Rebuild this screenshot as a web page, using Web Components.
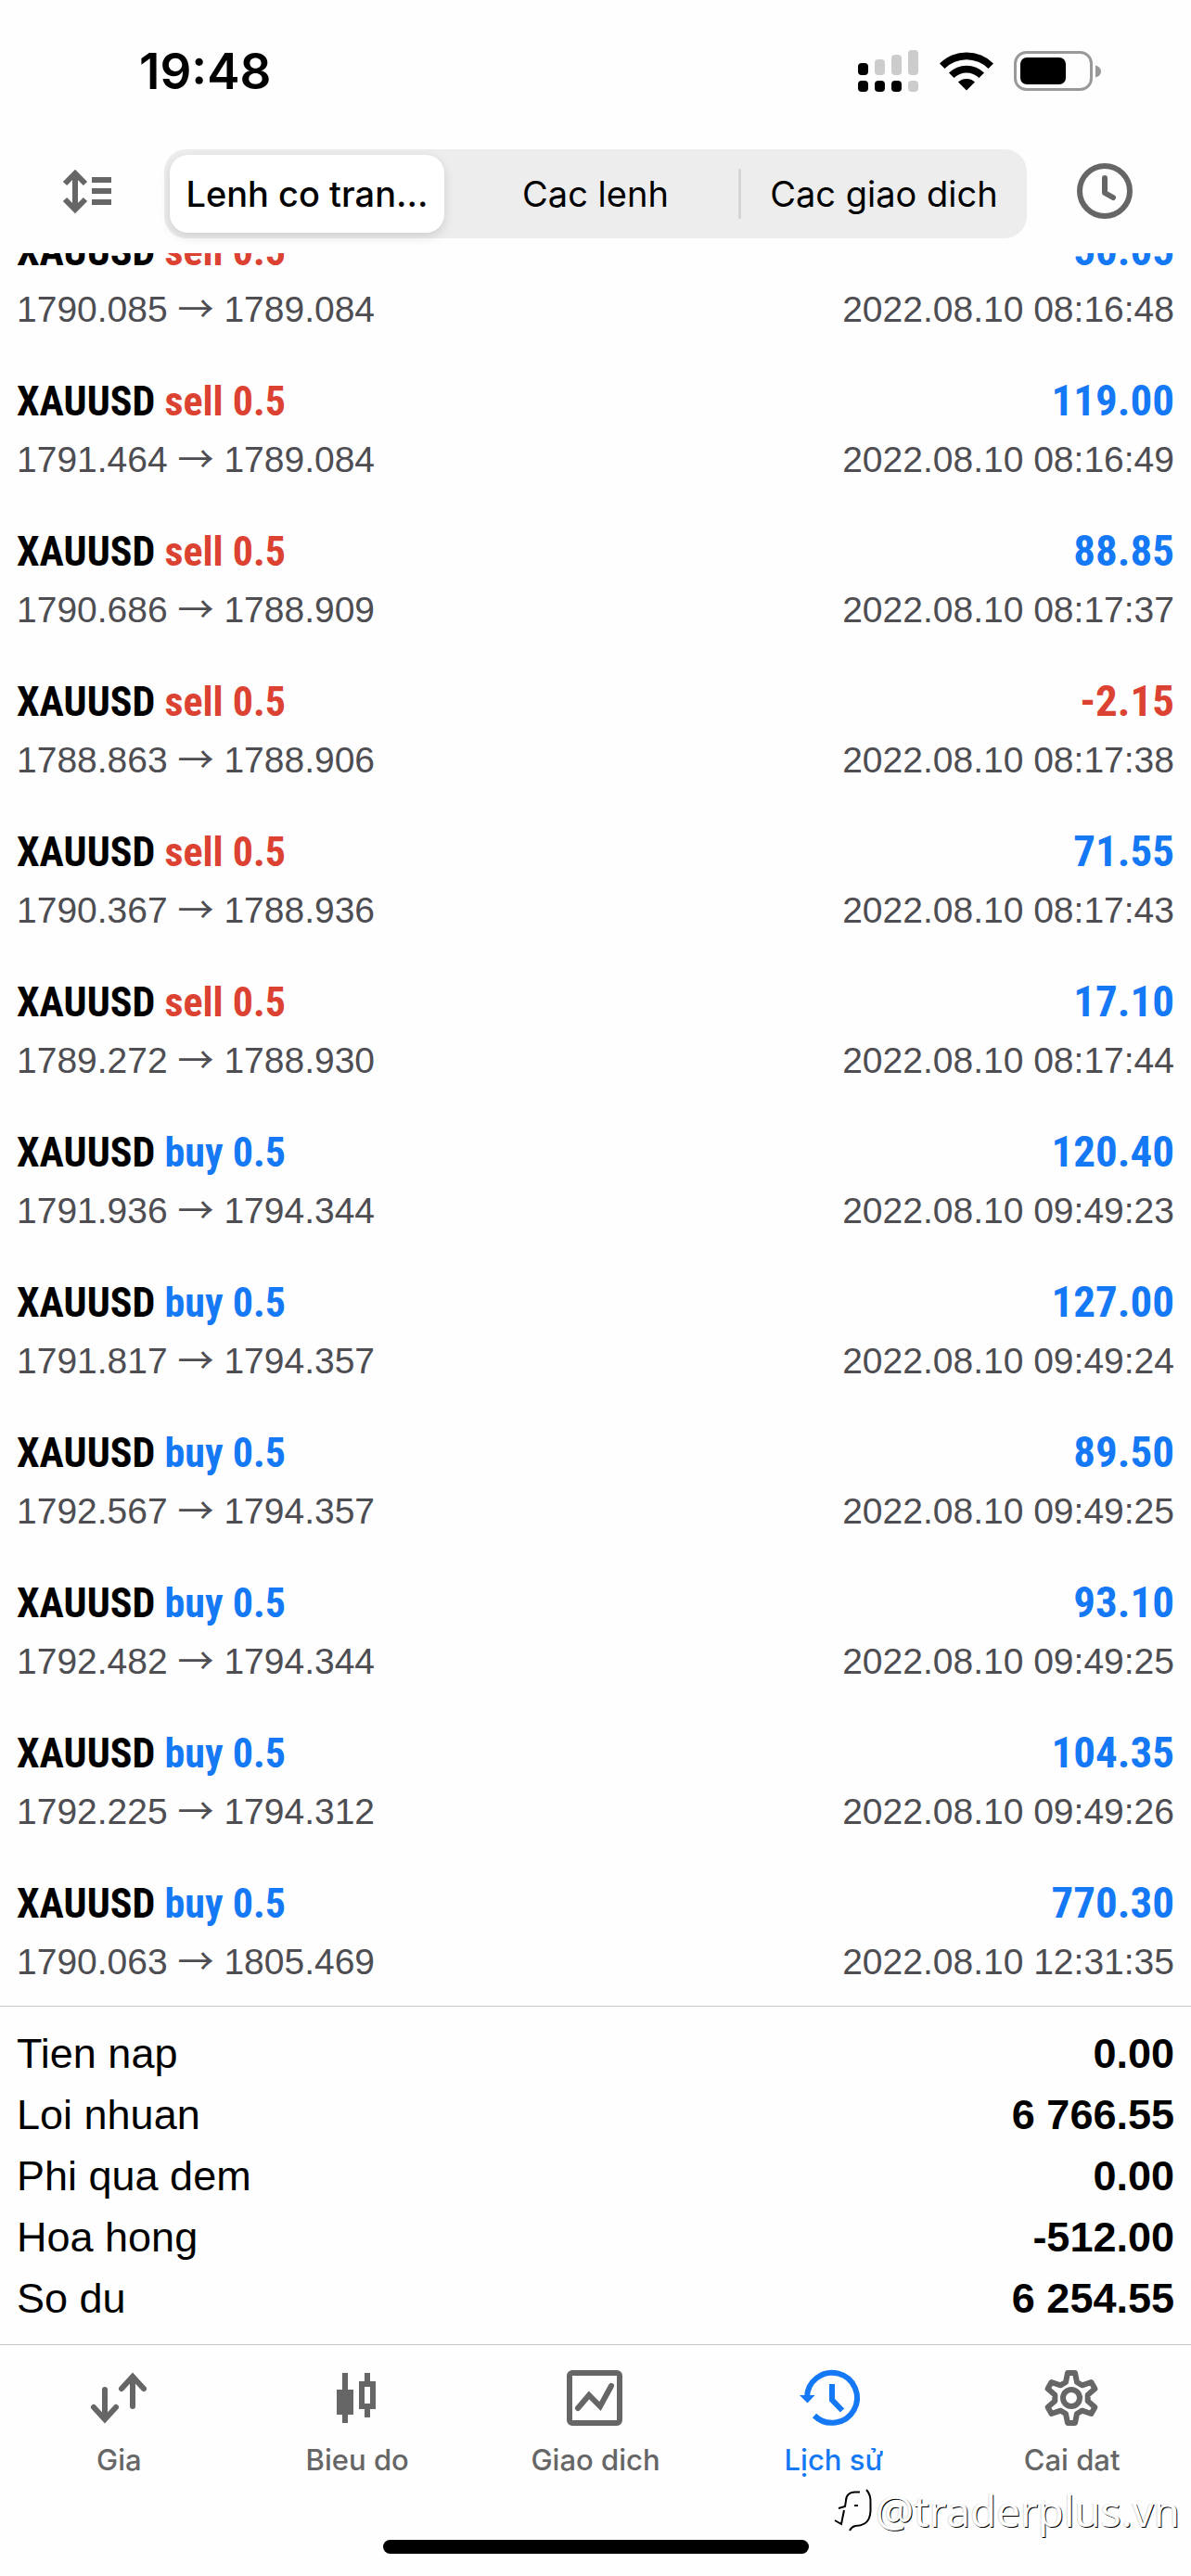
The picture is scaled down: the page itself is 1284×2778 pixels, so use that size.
<!DOCTYPE html>
<html lang="vi">
<head>
<meta charset="utf-8">
<meta name="viewport" content="width=device-width, initial-scale=1">
<title>Lịch sử</title>
<style>
  html, body { margin: 0; height: 100%; }
  body {
    background: #fefefe;
    color: #000;
    font-family: "Liberation Sans", Arial, sans-serif;
    --ui: Inter, Roboto, sans-serif;
    --narrow: "Roboto Condensed", "Liberation Sans Narrow", sans-serif;
    --gray: #666;
    --sub: #4d4d52;
    --blue: #1579f5;
    --red: #dc4232;
    --line: #c8c8c8;
    --edge: 18px;
  }
</style>
</head>
<body>
<history-app></history-app>

<script>
const define = (name, html, setup) => {
  const template = document.createElement('template');
  template.innerHTML = html;
  customElements.define(name, class extends HTMLElement {
    connectedCallback() {
      if (this.shadowRoot) return;
      const root = this.attachShadow({ mode: 'open' });
      root.append(template.content.cloneNode(true));
      if (setup) setup(this, root);
    }
  });
};

define('status-bar', `
<style>
  :host { display: flex; flex: none; justify-content: space-between; align-items: center; height: 145px; padding: 8px 96px 0 150px; box-sizing: border-box; }
  time { font: 600 53px/60px var(--ui); }
  .icons { display: flex; align-items: center; gap: 22px; }
  svg { display: block; }
</style>
<time>19:48</time>
<div class="icons">
  <svg width="66" height="46" viewBox="0 0 66 46" aria-label="signal">
    <g fill="#ccc">
      <rect x="18" y="10" width="11" height="17" rx="4"/><rect x="36" y="5" width="11" height="22" rx="4"/>
      <rect x="54" y="0" width="11" height="27" rx="4"/><rect x="54" y="33" width="11" height="12" rx="4"/>
    </g>
    <rect x="0" y="14" width="11" height="13" rx="4"/><rect x="0" y="33" width="11" height="12" rx="4"/>
    <rect x="18" y="33" width="11" height="12" rx="4"/><rect x="36" y="33" width="11" height="12" rx="4"/>
  </svg>
  <svg width="58" height="44" viewBox="0 0 58 44" aria-label="wifi">
    <path d="M0 13.500A41 41 0 0 1 58 13.500L52.500 19A33.500 33.500 0 0 0 5.500 19Z"/>
    <path d="M10 23.500A27 27 0 0 1 48 23.500L42.500 29A19.500 19.500 0 0 0 15.500 29Z"/>
    <path d="M20 33.500A13.500 13.500 0 0 1 38 33.500L29 42.500Z"/>
  </svg>
  <svg width="95" height="44" viewBox="0 0 95 44" aria-label="battery">
    <rect x="1.500" y="1.500" width="82" height="40" rx="12" fill="none" stroke="#999" stroke-width="3"/>
    <rect x="7" y="7" width="49" height="29" rx="7"/>
    <path d="M88 15.500Q94 17 94 22T88 28.500Z" fill="#999"/>
  </svg>
</div>`);

define('segmented-control', `
<style>
  :host { display: grid; grid-template-columns: 1fr 3px 1fr 3px 1fr; height: 96px; background: #ededed; border-radius: 24px; }
  button { min-width: 0; border: 0; padding: 0; background: none; color: #000; font: 400 38px/48px var(--ui); white-space: nowrap; }
  button[aria-pressed="true"] { margin: 6px; background: #fff; border-radius: 20px; font-weight: 500; box-shadow: 0 4px 12px rgba(0,0,0,.13); }
  i { margin: 21px 0; border-radius: 2px; }
  i.on { background: #d4d4d6; }
</style>
<button type="button" aria-pressed="true">Lenh co tran...</button><i></i>
<button type="button" aria-pressed="false">Cac lenh</button><i class="on"></i>
<button type="button" aria-pressed="false">Cac giao dich</button>`);

define('history-header', `
<style>
  :host { display: grid; flex: none; grid-template-columns: 177px 1fr 177px; align-items: center; padding: 16px 0; }
  .side { border: 0; padding: 0; background: none; display: flex; justify-content: center; }
  svg { display: block; fill: none; stroke: var(--gray); stroke-width: 6; }
</style>
<button class="side" type="button" aria-label="Sort">
  <svg width="73" height="72" viewBox="0 0 73 72">
    <path d="M29 15V52M18 25L29 14L40 25M18 42L29 53L40 42M47 21H68M47 33H68M47 45H68"/>
  </svg>
</button>
<segmented-control></segmented-control>
<button class="side" type="button" aria-label="Period">
  <svg width="73" height="72" viewBox="0 0 73 72" stroke-linecap="round" stroke-linejoin="round">
    <circle cx="32" cy="33" r="27"/><path d="M32 19V35L41 40"/>
  </svg>
</button>`);

define('deal-row', `
<style>
  :host { display: block; padding: 21px var(--edge) 23px; }
  div { display: flex; justify-content: space-between; align-items: baseline; white-space: nowrap; }
  .head { height: 60px; font: 700 44px/60px var(--narrow); margin-bottom: 10px; }
  .profit { font-size: 47px; }
  .info { height: 48px; font-size: 39px; line-height: 48px; color: var(--sub); }
  .arrow { font-family: "Noto Sans CJK JP", sans-serif; line-height: 40px; }
  .blue { color: var(--blue); }
  .red { color: var(--red); }
</style>
<div class="head"><span>XAUUSD <span class="side"></span></span><span class="profit"></span></div>
<div class="info"><span><span class="open"></span> <span class="arrow">→</span> <span class="close"></span></span><span class="time"></span></div>`,
(el, root) => {
  const put = (cls, text) => { const n = root.querySelector('.' + cls); n.textContent = text; return n; };
  const side = el.getAttribute('side');
  const profit = el.getAttribute('profit');
  put('side', side + ' 0.5').classList.add(side === 'buy' ? 'blue' : 'red');
  put('profit', profit).classList.add(profit[0] === '-' ? 'red' : 'blue');
  put('open', el.getAttribute('open'));
  put('close', el.getAttribute('close'));
  put('time', '2022.08.10 ' + el.getAttribute('time'));
});

define('deal-list', `
<style>
  :host { display: flex; flex: 1 1 0; min-height: 0; flex-direction: column; justify-content: flex-end; overflow: hidden; }
  deal-row { flex: none; }
</style>`,
(el, root) => {
  [
    ['sell', '50.05', '1790.085', '1789.084', '08:16:48'],
    ['sell', '119.00', '1791.464', '1789.084', '08:16:49'],
    ['sell', '88.85', '1790.686', '1788.909', '08:17:37'],
    ['sell', '-2.15', '1788.863', '1788.906', '08:17:38'],
    ['sell', '71.55', '1790.367', '1788.936', '08:17:43'],
    ['sell', '17.10', '1789.272', '1788.930', '08:17:44'],
    ['buy', '120.40', '1791.936', '1794.344', '09:49:23'],
    ['buy', '127.00', '1791.817', '1794.357', '09:49:24'],
    ['buy', '89.50', '1792.567', '1794.357', '09:49:25'],
    ['buy', '93.10', '1792.482', '1794.344', '09:49:25'],
    ['buy', '104.35', '1792.225', '1794.312', '09:49:26'],
    ['buy', '770.30', '1790.063', '1805.469', '12:31:35']
  ].forEach(([side, profit, open, close, time]) => {
    const row = document.createElement('deal-row');
    Object.entries({ side, profit, open, close, time }).forEach(([k, v]) => row.setAttribute(k, v));
    root.append(row);
  });
});

define('account-summary', `
<style>
  :host { display: block; flex: none; border-top: 1px solid var(--line); padding: 18px var(--edge) 16px; }
  dl { margin: 0; }
  div { display: flex; justify-content: space-between; font-size: 45px; line-height: 66px; }
  dd { margin: 0; font-weight: 700; }
</style>
<dl>
  <div><dt>Tien nap</dt><dd>0.00</dd></div>
  <div><dt>Loi nhuan</dt><dd>6 766.55</dd></div>
  <div><dt>Phi qua dem</dt><dd>0.00</dd></div>
  <div><dt>Hoa hong</dt><dd>-512.00</dd></div>
  <div><dt>So du</dt><dd>6 254.55</dd></div>
</dl>`);

define('tab-item', `
<style>
  :host { display: block; flex: 1 1 0; }
  a { display: flex; flex-direction: column; align-items: center; gap: 17px; color: var(--gray); text-decoration: none; font: 500 31px/40px var(--ui); }
  :host([active]) a { color: var(--blue); }
</style>
<a href="#"><slot name="icon"></slot><slot></slot></a>`);

define('tab-bar', `
<style>
  :host { display: block; flex: none; border-top: 1px solid var(--line); padding: 27px 0 24px; }
  nav { display: flex; }
  svg { display: block; overflow: visible; fill: none; stroke: currentColor; stroke-width: 6; }
  .home { width: 459px; height: 15px; margin: 66px auto 0; border-radius: 8px; background: #000; }
</style>
<nav>
  <tab-item><svg slot="icon" width="72" height="60" viewBox="0 0 72 60" stroke-linecap="round">
    <path d="M21 21V50M51 39V10"/><path d="M9 40L21 53L33 40M39 20L51 7L63 20"/></svg>Gia</tab-item>
  <tab-item><svg slot="icon" width="72" height="60" viewBox="0 0 72 60">
    <path d="M23 3V57M47 3V15M47 39V51"/><path d="M14 21H32V48H14Z" fill="currentColor" stroke="none"/><path d="M41 15H53V39H41Z"/></svg>Bieu do</tab-item>
  <tab-item><svg slot="icon" width="72" height="60" viewBox="0 0 72 60" stroke-linecap="round">
    <rect x="8" y="3" width="54" height="54" rx="3"/><path d="M17 41L29 27L41 39L53 17"/></svg>Giao dich</tab-item>
  <tab-item active><svg slot="icon" width="72" height="60" viewBox="0 0 72 60">
    <path d="M15 49A27 27 0 1 0 7 30V28"/><path d="M34 15V32L45 43.500"/><path d="M-1 27H15.500L7.500 35.500Z" fill="currentColor" stroke="none"/></svg>Lịch sử</tab-item>
  <tab-item><svg slot="icon" width="72" height="60" viewBox="-35 -30 72 60" stroke-linejoin="round">
    <path d="M-6-17L-4-27H4L6-17L11.700-13.700L21.400-17L25.400-10L17.700-3.300V3.300L25.400 10L21.400 17L11.700 13.700L6 17L4 27H-4L-6 17L-11.700 13.700L-21.400 17L-25.400 10L-17.700 3.300V-3.300L-25.400-10L-21.400-17L-11.700-13.700Z"/><circle r="9"/></svg>Cai dat</tab-item>
</nav>
<div class="home"></div>`);

define('water-mark', `
<style>
  :host { position: absolute; right: 12px; bottom: 41px; display: flex; align-items: center; gap: 2px; pointer-events: none; font: 400 46px/60px "Open Sans", "Noto Sans", sans-serif; color: #fff; text-shadow: 1px 1px 0 #000, -1px 0 0 #ddd; }
  svg { display: block; }
</style>
<svg width="44" height="50" viewBox="0 0 44 50" fill="none" stroke="#000" stroke-width="2">
  <path d="M29 5.500H24C18 5.500 14 9 14 15L13 21L6 23M12 25L9 40L2 36M23 20H27"/>
  <path d="M36 3Q41 8 40.500 18V26Q40 36 34 39.500Q30 42 24 42Q20 43 18 47"/>
</svg>
<span>@traderplus.vn</span>`);

define('history-app', `
<style>
  :host { position: relative; display: flex; flex-direction: column; height: 100vh; overflow: hidden; }
</style>
<status-bar></status-bar>
<history-header></history-header>
<deal-list></deal-list>
<account-summary></account-summary>
<tab-bar></tab-bar>
<water-mark></water-mark>`);
</script>
</body>
</html>
